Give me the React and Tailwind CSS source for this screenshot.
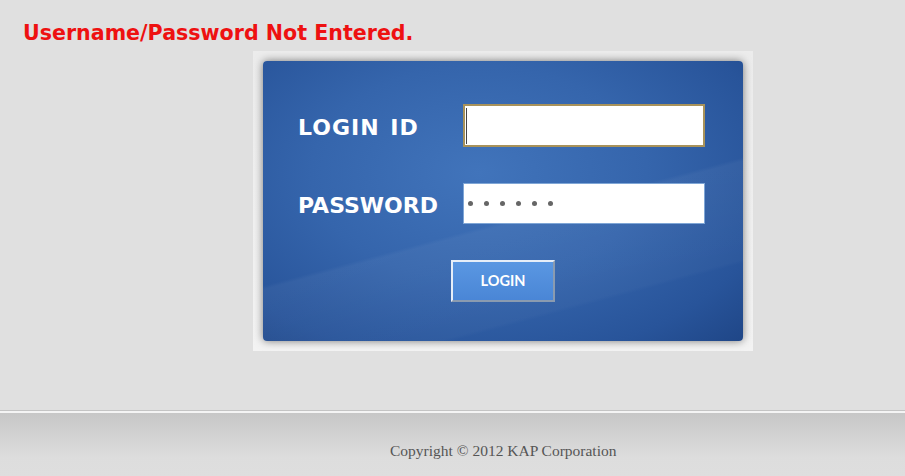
import React from "react";

export default function App() {
  return (
    <div className="w-[905px] h-[476px] bg-[#e0e0e0] flex flex-col overflow-hidden">
      <div className="pl-[23px] pt-[20px] h-[51px] text-[20.6px] leading-[26px] font-bold text-[#ee1111] font-['Comic_Sans_MS','DejaVu_Sans',sans-serif]">
        Username/Password Not Entered.
      </div>
      <div className="ml-[253px] w-[500px] h-[300px] p-[10px] bg-[linear-gradient(to_bottom,#ececec,#f3f3f3)]">
        <div className="relative w-[480px] h-[280px] rounded-[4px] overflow-hidden shadow-[0_0_9px_rgba(0,0,0,0.5)] bg-[radial-gradient(ellipse_at_45%_40%,#4174bb_0%,#3565ac_45%,#28549a_80%,#1f4687_100%)]">
          <div className="absolute inset-0 bg-[linear-gradient(165deg,transparent_55%,rgba(255,255,255,0.045)_56%,rgba(255,255,255,0.025)_80%,transparent_81%)]" />
          <div className="relative flex flex-col pl-[35px] pt-[43px]">
            <div className="flex items-center h-[43px]">
              <div className="w-[165px] pt-[4px] text-[22px] tracking-[1px] [word-spacing:2px] font-bold text-white font-['Comic_Sans_MS','DejaVu_Sans',sans-serif]">
                LOGIN ID
              </div>
              <div className="w-[242px] h-[43px] bg-white border-2 border-[#a8925a] flex items-center pl-[1px]">
                <span className="w-[1px] h-[36px] bg-[#444]" />
              </div>
            </div>
            <div className="flex items-center h-[41px] mt-[36px]">
              <div className="w-[165px] pt-[3px] text-[22px] font-bold text-white font-['Comic_Sans_MS','DejaVu_Sans',sans-serif]">
                PASSWORD
              </div>
              <div className="w-[242px] h-[41px] bg-white border border-[#7fa6d6] flex items-center pl-[4px] gap-[11px]">
                <span className="w-[5px] h-[5px] rounded-full bg-[#666]" />
                <span className="w-[5px] h-[5px] rounded-full bg-[#666]" />
                <span className="w-[5px] h-[5px] rounded-full bg-[#666]" />
                <span className="w-[5px] h-[5px] rounded-full bg-[#666]" />
                <span className="w-[5px] h-[5px] rounded-full bg-[#666]" />
                <span className="w-[5px] h-[5px] rounded-full bg-[#666]" />
              </div>
            </div>
            <div className="ml-[153px] mt-[36px] w-[104px] h-[42px] border-2 border-t-[#e6eef8] border-l-[#e6eef8] border-r-[#8a9bb0] border-b-[#8a9bb0] bg-[linear-gradient(to_bottom,#5a97e2,#4a86d6)] flex items-center justify-center text-white text-[14.5px] font-bold font-['Lato','Open_Sans',sans-serif]">
              LOGIN
            </div>
          </div>
        </div>
      </div>
      <div className="flex-1" />
      <div className="h-[66px] border-t border-[#c4c4c4] bg-[#e0e0e0]">
        <div className="h-full border-t-2 border-[#f4f4f4] bg-[linear-gradient(to_bottom,#c7c7c7,#dddddd_70%,#dedede)]">
          <div className="pl-[390px] pt-[26px] text-[15.5px] text-[#555] font-['Liberation_Serif','Times_New_Roman',serif]">
            Copyright © 2012 KAP Corporation
          </div>
        </div>
      </div>
    </div>
  );
}
